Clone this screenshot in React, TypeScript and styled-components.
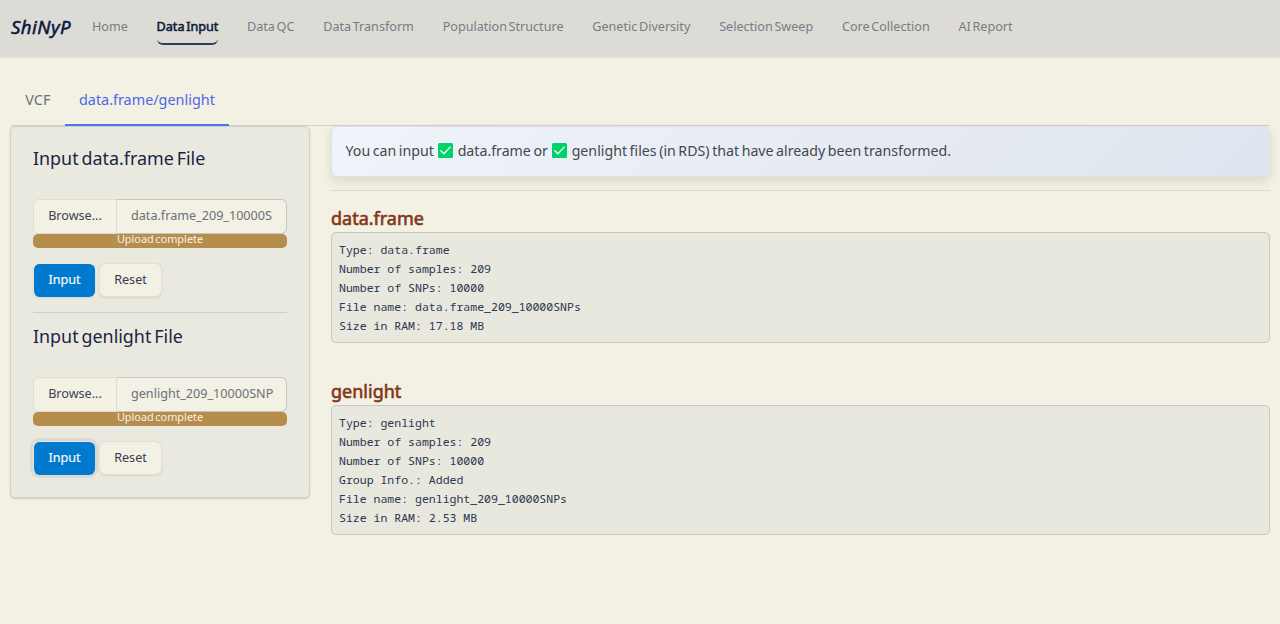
import React from "react";
import styled, { createGlobalStyle } from "styled-components";

const GlobalStyle = createGlobalStyle`
  *, *::before, *::after { box-sizing: border-box; }
  body {
    margin: 0;
    background: #f3f0e4;
    color: #1b2445;
    font-family: "Noto Sans", "Open Sans", sans-serif;
    font-size: 12.62px;
    word-spacing: -1.8px;
    overflow: hidden;
  }
  #root { height: 624px; }
  h1, h2, h3, p, pre { margin: 0; font-weight: 400; }
`;

const Navbar = styled.nav`
  display: flex;
  align-items: flex-start;
  height: 58px;
  padding: 0 11px;
  background: #dcdbd5;
  border-bottom: 1px solid #e2e0d8;
`;

const Brand = styled.h1`
  width: 66.6px;
  padding-top: 15px;
  color: #0c1740;
  font-size: 18.7px;
  letter-spacing: 0.4px;
  line-height: 24px;
  font-style: italic;
  -webkit-text-stroke: 0.5px currentColor;
`;

const NavItem = styled.a<{ $active?: boolean }>`
  height: 31px;
  margin: 14px 14.4px 0;
  border-bottom: 2px solid ${(p) => (p.$active ? "#2c3e64" : "transparent")};
  border-radius: 6px;
  color: ${(p) => (p.$active ? "#111b3c" : "#777c86")};
  font-size: 12.6px;
  word-spacing: -1.6px;
  line-height: 26px;
  white-space: nowrap;
  -webkit-text-stroke: ${(p) => (p.$active ? "0.55px currentColor" : "0")};
`;

const Page = styled.main`
  padding: 16px 10px 0;
`;

const Tabs = styled.div`
  display: flex;
  height: 52px;
  margin-left: 1px;
  border-bottom: 1px solid #d2d2cb;
`;

const Tab = styled.a<{ $active?: boolean }>`
  height: 52px;
  padding: 14px 14.3px 0;
  border-bottom: 2px solid ${(p) => (p.$active ? "#5473e8" : "transparent")};
  color: ${(p) => (p.$active ? "#4d68e4" : "#6a6f79")};
  font-size: 14.4px;
  line-height: 24px;
`;

const Columns = styled.div`
  display: grid;
  grid-template-columns: 300px 939px;
  gap: 21px;
  align-items: start;
`;

const Sidebar = styled.aside`
  height: 372px;
  padding: 17px 22px 0;
  border: 1px solid #cfd0c9;
  border-radius: 5px;
  background: #eae9df;
  box-shadow: 0 1px 2px rgba(60, 60, 40, 0.2);
`;

const SidebarTitle = styled.h2`
  font-size: 17.9px;
  line-height: 28px;
`;

const FileInput = styled.div`
  display: flex;
  height: 35px;
  margin-top: 27px;
`;

const Browse = styled.button`
  width: 84px;
  padding: 0 0 2px;
  border: 1px solid #e0ddd0;
  border-radius: 6px 0 0 6px;
  background: #f3f0e4;
  color: #3b4358;
  font: inherit;
`;

const FileName = styled.div`
  flex: 1;
  padding-left: 14px;
  border: 1px solid #c3c5c3;
  border-left: 0;
  border-radius: 0 6px 6px 0;
  background: #f3f0e4;
  color: #6b7078;
  line-height: 32px;
  white-space: nowrap;
`;

const Progress = styled.div`
  height: 14px;
  border-radius: 5px;
  background: #b68d4c;
  color: #f6f1e3;
  font-size: 10.9px;
  line-height: 10px;
  text-align: center;
  word-spacing: -1.2px;
`;

const Actions = styled.div`
  display: flex;
  gap: 4px;
  margin-top: 15px;
`;

const Button = styled.button<{ $primary?: boolean; $focus?: boolean }>`
  width: ${(p) => (p.$primary ? 62 : 63)}px;
  height: 34px;
  padding: 0 0 2px;
  border: 1px solid ${(p) => (p.$primary ? "#e8e6dc" : "#e3e0d4")};
  border-width: ${(p) => (p.$primary ? "1px 0 0 1px" : "1px")};
  border-radius: 6px;
  background: ${(p) => (p.$primary ? "#007acf" : "#f3f0e4")};
  background-clip: padding-box;
  color: ${(p) => (p.$primary ? "#fbf8ed" : "#343c52")};
  font: inherit;
  -webkit-text-stroke: ${(p) => (p.$primary ? "0.2px currentColor" : "0")};
  box-shadow: ${(p) =>
    p.$focus ? "0 0 0 3px #dadad5" : "0 1px 2px rgba(60, 60, 40, 0.1)"};
`;

const SidebarRule = styled.div`
  height: 1px;
  margin: 15px 0 9px;
  background: #cfcfc8;
`;

const Notice = styled.div`
  display: flex;
  align-items: center;
  height: 51px;
  padding: 0 13.5px 3px;
  border: 1px solid #dde2e9;
  border-radius: 6px;
  background: linear-gradient(135deg, #eff3fa, #dfe5ee);
  box-shadow: 0 4px 10px rgba(60, 50, 20, 0.12);
  color: #45474b;
  font-size: 14.2px;
  word-spacing: -1.15px;
  white-space: pre;
`;

const CheckIcon = styled.svg`
  width: 15px;
  height: 15px;
  margin: 0 4.4px;
`;

const Rule = styled.div`
  height: 1px;
  margin: 13px 0 13px;
  background: #dbd9cf;
`;

const Result = styled.section`
  margin-bottom: 34px;
`;

const ResultTitle = styled.h3`
  color: #833719;
  font-size: 18px;
  line-height: 28px;
  -webkit-text-stroke: 0.6px currentColor;
`;

const Output = styled.pre`
  padding: 7px 7px;
  border: 1px solid #c5c7c4;
  border-radius: 5px;
  background: #e9e8de;
  color: #2b3652;
  font-family: "Noto Sans Mono", "DejaVu Sans Mono", monospace;
  font-size: 11.52px;
  line-height: 19px;
  word-spacing: 0;
`;

const pages = [
  "Home",
  "Data Input",
  "Data QC",
  "Data Transform",
  "Population Structure",
  "Genetic Diversity",
  "Selection Sweep",
  "Core Collection",
  "AI Report",
];

const frameInfo = `Type: data.frame
Number of samples: 209
Number of SNPs: 10000
File name: data.frame_209_10000SNPs
Size in RAM: 17.18 MB`;

const genlightInfo = `Type: genlight
Number of samples: 209
Number of SNPs: 10000
Group Info.: Added
File name: genlight_209_10000SNPs
Size in RAM: 2.53 MB`;

function Check() {
  return (
    <CheckIcon viewBox="0 0 15 15" aria-hidden="true">
      <rect width="15" height="15" rx="1.5" fill="#00d26a" />
      <path
        d="M2.8 7.8 5.9 10.8 12.1 4.1"
        fill="none"
        stroke="#f5fff8"
        strokeWidth="1.3"
        strokeLinecap="round"
        strokeLinejoin="round"
      />
    </CheckIcon>
  );
}

function Upload({ title, file, focus }: { title: string; file: string; focus?: boolean }) {
  return (
    <section>
      <SidebarTitle>{title}</SidebarTitle>
      <FileInput>
        <Browse>Browse...</Browse>
        <FileName>{file}</FileName>
      </FileInput>
      <Progress>Upload complete</Progress>
      <Actions>
        <Button $primary $focus={focus}>Input</Button>
        <Button>Reset</Button>
      </Actions>
    </section>
  );
}

export default function App() {
  return (
    <>
      <GlobalStyle />
      <Navbar>
        <Brand>ShiNyP</Brand>
        {pages.map((page) => (
          <NavItem key={page} $active={page === "Data Input"}>{page}</NavItem>
        ))}
      </Navbar>
      <Page>
        <Tabs>
          <Tab>VCF</Tab>
          <Tab $active>data.frame/genlight</Tab>
        </Tabs>
        <Columns>
          <Sidebar>
            <Upload title="Input data.frame File" file="data.frame_209_10000S" />
            <SidebarRule />
            <Upload title="Input genlight File" file="genlight_209_10000SNP" focus />
          </Sidebar>
          <div>
            <Notice>
              <span>You can input</span>
              <Check />
              <span>data.frame or</span>
              <Check />
              <span>genlight files (in RDS) that have already been transformed.</span>
            </Notice>
            <Rule />
            <Result>
              <ResultTitle>data.frame</ResultTitle>
              <Output>{frameInfo}</Output>
            </Result>
            <Result>
              <ResultTitle>genlight</ResultTitle>
              <Output>{genlightInfo}</Output>
            </Result>
          </div>
        </Columns>
      </Page>
    </>
  );
}
